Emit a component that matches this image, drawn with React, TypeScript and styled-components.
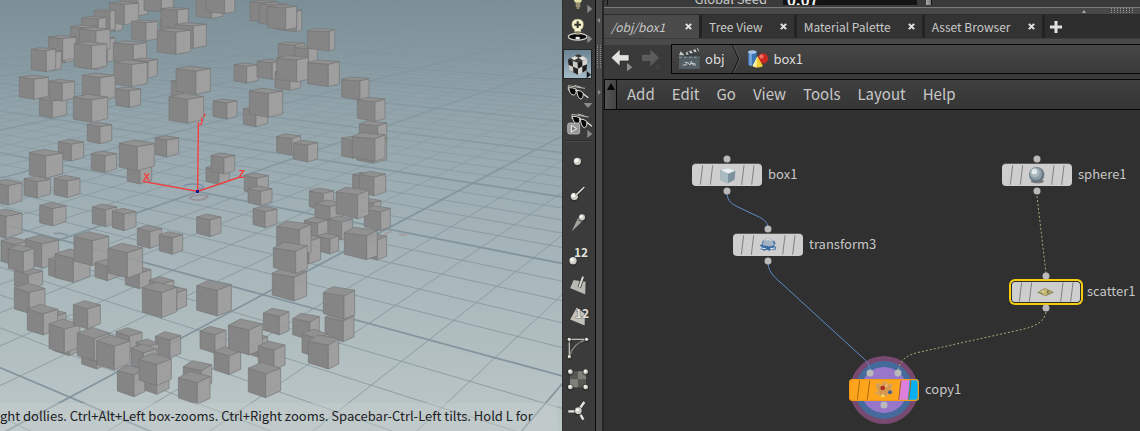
import React from "react";
import styled, { createGlobalStyle, css } from "styled-components";

const GlobalStyle = createGlobalStyle`
  * { box-sizing: border-box; }
  body { margin: 0; background: #303030; }
  body, button, input { font-family: "Noto Sans CJK SC", "Noto Sans CJK JP", sans-serif; }
  button { border: 0; padding: 0; margin: 0; background: none; color: inherit; cursor: pointer; }
  svg { display: block; }
`;

const Shell = styled.div`
  display: flex;
  height: 100vh;
  min-height: 300px;
  overflow: hidden;
  color: #c8c8c8;
`;

/* ---------- 3D viewport ---------- */

const Viewport = styled.section`
  flex: 562 1 0;
  min-width: 0;
  display: grid;
  grid-template: minmax(0, 1fr) / minmax(0, 1fr);
  overflow: hidden;
  background: #9dadb2;
`;

const SceneSvg = styled.svg`
  grid-area: 1 / 1;
  width: 100%;
  height: 100%;
`;

const Hint = styled.p`
  grid-area: 1 / 1;
  align-self: end;
  z-index: 1;
  margin: 0 5px 0 0;
  height: 28px;
  line-height: 26px;
  font-size: 13px;
  white-space: nowrap;
  overflow: hidden;
  color: #1c2022;
  background: rgba(200, 208, 208, 0.4);
`;

type Pt = [number, number];
type Line = { from: Pt; to: Pt; major: boolean };

const ORIGIN: Pt = [593, 575];
const VANISH_A: Pt = [-2842, -102];
const VANISH_B: Pt = [2860, -216];

const toward = (vp: Pt, w: number): Pt => [
  (ORIGIN[0] + w * vp[0]) / (1 + w),
  (ORIGIN[1] + w * vp[1]) / (1 + w),
];

const gridLine = (p: Pt, vp: Pt, major: boolean): Line => {
  const slope = (p[1] - vp[1]) / (p[0] - vp[0]);
  const at = (x: number): Pt => [x, p[1] + slope * (x - p[0])];
  return { from: at(-60), to: at(1760), major };
};

const gridLines: Line[] = [];
for (let i = -16; i <= 110; i++) {
  gridLines.push(gridLine(toward(VANISH_B, (i / 5) * 0.1539), VANISH_A, i % 5 === 0));
}
for (let i = -16; i <= 70; i++) {
  gridLines.push(gridLine(toward(VANISH_A, (i / 5) * 0.1417), VANISH_B, i % 5 === 0));
}

function Grid() {
  return (
    <g>
      {gridLines.map((l, i) => (
        <line
          key={i}
          x1={l.from[0]}
          y1={l.from[1]}
          x2={l.to[0]}
          y2={l.to[1]}
          stroke={l.major ? "#7c8e98" : "#84949b"}
          strokeWidth={l.major ? 5 : 3}
          opacity={l.major ? 0.8 : 0.62}
        />
      ))}
    </g>
  );
}

/* left, top, right, bottom, x of the front edge; ordered back to front */
const cubes: number[][] = [
  [360, -14, 443, 48, 413], [300, 38, 368, 94, 345], [328, 5, 416, 74, 373], [432, -25, 520, 36, 484],
  [480, 52, 560, 112, 530], [484, 22, 565, 84, 532], [588, -14, 668, 55, 635], [618, -25, 704, 41, 674],
  [750, 1, 830, 67, 800], [778, 8, 860, 76, 830], [830, 28, 905, 95, 890], [802, 15, 890, 89, 857],
  [283, 28, 345, 92, 330], [245, 49, 318, 110, 295], [270, 110, 345, 187, 322], [212, 75, 290, 145, 260],
  [238, 82, 330, 155, 288], [150, 124, 225, 188, 195], [146, 106, 228, 182, 188], [237, 140, 310, 209, 290],
  [223, 125, 320, 207, 275], [120, 150, 184, 212, 160], [94, 143, 167, 215, 139],
  [395, 60, 473, 123, 438], [340, 122, 440, 190, 400], [400, 174, 472, 234, 444], [342, 180, 442, 260, 395],
  [525, 68, 619, 145, 580], [472, 85, 572, 163, 528],
  [118, 290, 200, 354, 157], [58, 225, 145, 298, 102], [147, 238, 224, 303, 187],
  [247, 219, 345, 302, 300], [220, 283, 323, 367, 275], [348, 261, 422, 323, 388],
  [514, 238, 580, 300, 550], [528, 199, 631, 283, 588], [507, 281, 611, 370, 563],
  [639, 297, 711, 357, 681], [702, 189, 775, 249, 740], [771, 178, 850, 238, 817],
  [730, 320, 803, 380, 768], [748, 265, 848, 352, 805],
  [835, 126, 913, 190, 888], [885, 138, 952, 195, 925], [825, 209, 902, 271, 870], [830, 167, 925, 246, 890],
  [922, 86, 1004, 153, 988], [923, 180, 1018, 260, 985], [1025, 231, 1107, 300, 1080],
  [1072, 292, 1155, 364, 1125], [1078, 363, 1160, 440, 1133], [1025, 408, 1100, 475, 1060],
  [1070, 405, 1160, 490, 1120], [1057, 398, 1155, 484, 1125],
  [830, 402, 902, 465, 876], [880, 421, 953, 486, 923],
  [262, 367, 335, 431, 300], [175, 418, 251, 483, 214], [274, 453, 350, 517, 315], [466, 407, 536, 471, 500],
  [382, 490, 455, 552, 420], [358, 420, 463, 512, 412], [88, 448, 188, 535, 137],
  [72, 528, 152, 594, 112], [162, 526, 240, 593, 202], [-20, 538, 66, 615, 25],
  [618, 495, 688, 553, 657], [633, 459, 704, 522, 672], [733, 519, 805, 582, 771], [744, 558, 816, 617, 782],
  [759, 618, 831, 683, 795],
  [1058, 517, 1120, 575, 1092], [1078, 514, 1157, 587, 1122], [928, 564, 1001, 630, 970],
  [945, 600, 1030, 662, 990], [1085, 596, 1142, 640, 1120],
  [119, 607, 198, 678, 158], [277, 612, 350, 680, 317], [337, 625, 408, 692, 372], [-25, 627, 66, 715, 18],
  [412, 676, 485, 745, 450], [478, 695, 548, 763, 517], [590, 642, 663, 710, 630],
  [1093, 617, 1171, 692, 1142], [913, 652, 983, 710, 953], [985, 648, 1058, 720, 1025], [1008, 562, 1106, 656, 1073],
  [1085, 700, 1160, 780, 1132], [1033, 682, 1132, 779, 1100],
  [950, 700, 1016, 762, 990], [880, 702, 962, 792, 927],
  [43, 800, 128, 870, 85], [3, 712, 85, 795, 45], [76, 705, 176, 804, 125], [25, 735, 102, 817, 70],
  [146, 765, 230, 838, 190], [165, 747, 270, 847, 220], [222, 695, 326, 797, 277],
  [285, 778, 360, 842, 322], [376, 798, 453, 866, 418], [324, 730, 428, 834, 382],
  [448, 830, 522, 890, 485], [490, 858, 560, 930, 530], [427, 847, 530, 953, 485],
  [590, 840, 694, 948, 652],
  [817, 802, 920, 903, 882], [830, 663, 933, 768, 898], [820, 727, 922, 820, 887],
  [43, 850, 135, 940, 88], [130, 928, 198, 990, 168], [82, 913, 173, 1005, 130], [160, 1000, 235, 1067, 208],
  [147, 957, 240, 1060, 193], [220, 902, 301, 987, 263],
  [245, 1030, 330, 1107, 290], [232, 983, 330, 1083, 283], [348, 983, 426, 1058, 388],
  [466, 995, 542, 1075, 510], [408, 1017, 475, 1090, 437], [393, 1032, 470, 1110, 430], [290, 1005, 390, 1110, 343],
  [352, 1095, 435, 1190, 402], [435, 1110, 507, 1183, 470], [417, 1060, 514, 1157, 470],
  [790, 925, 867, 1005, 838], [600, 979, 678, 1060, 645], [740, 1000, 803, 1072, 775],
  [642, 1040, 722, 1124, 687], [685, 957, 787, 1065, 747],
  [775, 1023, 855, 1110, 822], [745, 1087, 842, 1193, 797],
  [550, 1082, 635, 1165, 605], [535, 1114, 630, 1213, 592],
  [975, 935, 1062, 1025, 1030], [970, 860, 1064, 958, 1032],
  [878, 940, 958, 1020, 930], [906, 988, 985, 1070, 945], [925, 1005, 1016, 1107, 985],
];

function Cube({ box }: { box: number[] }) {
  const [x1, y1, x2, y2, s] = box;
  const w = x2 - x1;
  const f = (s - x1) / w;
  const depth = w * (0.08 + 0.00024 * Math.max(0, (y1 + y2) / 2));
  const backX = x1 + w * (1 - f) * 0.9;
  const leftY = y1 + depth * f * 0.95;
  const rightY = y1 + depth * (1 - f) * 1.1;
  const frontY = y1 + depth;
  const leftB = y2 - depth * f * 0.85 - 2;
  const rightB = y2 - depth * (1 - f) * 1.1 - 3;
  return (
    <g stroke="#757575" strokeWidth={2} strokeLinejoin="round">
      <path fill="#868585" d={`M${x1} ${leftY}L${s} ${frontY}V${y2}L${x1} ${leftB}Z`} />
      <path fill="#9f9f9f" d={`M${s} ${frontY}L${x2} ${rightY}V${rightB}L${s} ${y2}Z`} />
      <path fill="#919191" d={`M${x1} ${leftY}L${backX} ${y1}L${x2} ${rightY}L${s} ${frontY}Z`} />
    </g>
  );
}

function Scene() {
  return (
    <SceneSvg viewBox="0 0 1686 1293" preserveAspectRatio="xMidYMid slice" role="img" aria-label="Perspective view of scattered boxes">
      <defs>
        <linearGradient id="sky" x1="0" y1="0" x2="0" y2="1">
          <stop offset="0" stopColor="#7b8f97" />
          <stop offset="0.25" stopColor="#92a4ab" />
          <stop offset="0.5" stopColor="#a1b1b6" />
          <stop offset="0.8" stopColor="#b1bec0" />
          <stop offset="1" stopColor="#bcc7c7" />
        </linearGradient>
        <linearGradient id="fadeFar" x1="0" y1="0" x2="0" y2="1">
          <stop offset="0" stopColor="#000" />
          <stop offset="0.04" stopColor="#1c1c1c" />
          <stop offset="0.15" stopColor="#696969" />
          <stop offset="0.4" stopColor="#c4c4c4" />
          <stop offset="0.6" stopColor="#fff" />
        </linearGradient>
        <linearGradient id="fadeNear" x1="0" y1="0" x2="0" y2="1">
          <stop offset="0.36" stopColor="#000" />
          <stop offset="0.5" stopColor="#555" />
          <stop offset="1" stopColor="#666" />
        </linearGradient>
        <mask id="farMask"><rect width="1686" height="1293" fill="url(#fadeFar)" /></mask>
        <mask id="nearMask"><rect width="1686" height="1293" fill="url(#fadeNear)" /></mask>
      </defs>
      <rect width="1686" height="1293" fill="url(#sky)" />
      <g mask="url(#farMask)"><Grid /></g>
      <g fill="none" strokeWidth="5">
        <path d="M552 560q0-8 26-8 28 0 32 8 0 6-14 6" stroke="#7f8da6" />
        <path d="M567 594q14-10 34-9 26 2 22 6-14 10-36 9-18-2-20-6" stroke="#968f95" />
        <path d="M162 700h22l20 6" stroke="#8795a3" />
        <path d="M1152 703l22-9M1196 704h24" stroke="#a49c9c" />
      </g>
      {cubes.map((c, i) => <Cube key={i} box={c} />)}
      <g mask="url(#nearMask)"><Grid /></g>
      <g stroke="#fb3b39" strokeWidth="4" fill="none">
        <path d="M593 574L595 366M593 574L428 544M593 574L714 533" />
        <path d="M433 520l14 22M447 520l-16 22M717 512h14l-14 20h16M605 352l1 12M616 341q-3 3-3 9M607 360q0 14-9 14" />
      </g>
      <rect x="588" y="570" width="9" height="9" fill="#12128c" />
    </SceneSvg>
  );
}

/* ---------- display toolbar ---------- */

const Toolbar = styled.div`
  flex: 0 0 33px;
  display: flex;
  flex-direction: column;
  overflow: hidden;
  background: #3b3b3b;
  border-left: 1px solid #303030;
`;

const ToolButton = styled.button<{ $h: number; $active?: boolean }>`
  flex: 0 0 ${(p) => p.$h}px;
  width: 32px;
  display: flex;
  justify-content: center;
  ${(p) =>
    p.$active &&
    css`
      width: 29px;
      background: linear-gradient(#6b8292, #a5bcc8);
      border: 1px solid #26292b;
    `}
`;

const ToolRule = styled.hr`
  flex: 0 0 2px;
  width: 29px;
  margin: 0 0 4px;
  border: 0;
  border-top: 1px solid #2c2c2c;
  border-bottom: 1px solid #484848;
`;

type ToolProps = { label: string; h?: number; active?: boolean; view: string; w?: number; children: React.ReactNode };

function Tool({ label, h = 31, active, view, w = 32, children }: ToolProps) {
  return (
    <ToolButton $h={h} $active={active} aria-label={label} aria-pressed={active}>
      <svg width={w} height={active ? h - 2 : h} viewBox={view}>{children}</svg>
    </ToolButton>
  );
}

const Glasses = ({ y = 0, x = 0 }) => (
  <g transform={`translate(${x} ${y})`}>
    <path d="M25 257l24 4 26 4M25 257q-1 10 1 15M42 256l20 5" stroke="#b9b9b2" strokeWidth="3" fill="none" />
    <path d="M26 263q13-1 23 5 0 16-8 17-12 0-15-22z" fill="#070707" stroke="#dcdcd4" strokeWidth="3" />
    <path d="M50 271q12 0 20 8 0 16-7 18-10 0-13-26z" fill="#070707" stroke="#dcdcd4" strokeWidth="3" />
    <path d="M69 281l16 12M46 270l6 2" stroke="#e4e4dc" strokeWidth="4" />
  </g>
);

const Ball = ({ x, y, r = 10 }: { x: number; y: number; r?: number }) => (
  <g>
    <circle cx={x} cy={y + 2} r={r + 3} fill="#222" opacity="0.5" />
    <circle cx={x} cy={y} r={r} fill="#cfcfc8" />
    <circle cx={x - r / 4} cy={y - r / 4} r={r / 2} fill="#fafaf4" />
  </g>
);

const numeral = { fill: "#e2e2dc", fontSize: 36, fontWeight: 700, fontFamily: "Noto Sans CJK SC, sans-serif", stroke: "#2a2a2a", strokeWidth: 2, paintOrder: "stroke" } as const;

function DisplayToolbar() {
  return (
    <Toolbar role="toolbar" aria-label="Display options">
      <Tool label="Lighting" h={14} view="9 0 96 42">
        <path d="M41-6h26q-2 14-7 14H48q-6 0-7-14z" fill="#e3e0a6" />
        <path d="M47 12h14M47 18h14M50 24h8" stroke="#b5aa7d" strokeWidth="5" />
        <path d="M82 14l15 13-15 12z" fill="#8b8b8b" />
      </Tool>
      <Tool label="Headlight" h={35} view="9 42 96 105">
        <ellipse cx="53" cy="110" rx="28" ry="10" fill="#0a0a0a" stroke="#d2d2ca" strokeWidth="4" />
        <ellipse cx="53" cy="114" rx="7" ry="4" fill="#eee" />
        <path d="M35 74q0-17 18-17t18 17q0 9-8 15v8H43v-8q-8-6-8-15z" fill="#f4f1cb" stroke="#6d6b54" strokeWidth="2" />
        <path d="M53 64v20M43 74h20" stroke="#33332b" strokeWidth="6" />
        <path d="M46 96h14M47 102h12" stroke="#8e8868" strokeWidth="5" />
        <path d="M82 104l15 13-15 12z" fill="#8b8b8b" />
      </Tool>
      <Tool label="Shading mode" h={30} active w={27} view="14 150 81 84">
        <path d="M26 178l29 10 2 37-28-15z" fill="#242424" />
        <path d="M55 188l29-12-2 34-25 15z" fill="#d4d4d0" />
        <path d="M26 178l31-16 27 14-29 12z" fill="#3a3a36" />
        <path d="M34 174l12-6 12 5-13 8zM58 173l12-5 14 8-14 6z" fill="#dcdcd8" />
        <path d="M40 183l15 5 1 18-15-6zM27 194l14 6 1 17-13-7z" fill="#cbcbc7" />
        <path d="M55 188l14-6v17l-13 7zM69 199l14-6-1 17-13 8z" fill="#1b1b1b" />
        <path d="M82 213l13 11-13 11z" fill="#16191b" />
      </Tool>
      <Tool label="Visible objects" h={30} view="9 237 96 90">
        <Glasses />
        <path d="M71 309h26l-13 15z" fill="#8b8b8b" />
      </Tool>
      <Tool label="Flipbook visibility" h={31} view="9 327 96 93">
        <Glasses x={11} y={86} />
        <rect x="23" y="369" width="36" height="33" rx="6" fill="#999" stroke="#d0d0d0" strokeWidth="2" />
        <path d="M34 376l16 10-16 10z" fill="#777" stroke="#f4f4f4" strokeWidth="3" />
        <path d="M82 389l15 13-15 12z" fill="#8b8b8b" />
      </Tool>
      <ToolRule />
      <Tool label="Display points" view="9 437 96 93"><Ball x={52} y={483} r={11} /></Tool>
      <Tool label="Point normals" view="9 530 96 93">
        <Ball x={43} y={588} r={11} />
        <path d="M48 584l25-24" stroke="#1d1d1d" strokeWidth="9" />
        <path d="M47 585l26-25" stroke="#d9d9d2" strokeWidth="5" />
      </Tool>
      <Tool label="Point trails" view="9 626 96 93">
        <path d="M58 648l14 13-37 35z" fill="#a5a59f" />
        <Ball x={66} y={654} r={9} />
      </Tool>
      <Tool label="Point numbers" view="9 714 96 93">
        <text x="42" y="767" {...numeral}>12</text>
        <Ball x={39} y={779} r={11} />
      </Tool>
      <Tool label="Primitive normals" view="9 810 96 93">
        <path d="M40 839l38 5-1 41-48-20z" fill="#b9b9b2" stroke="#2a2a2a" strokeWidth="2" />
        <path d="M58 862l11-32" stroke="#222" strokeWidth="10" />
        <path d="M58 862l11-32" stroke="#deded6" strokeWidth="6" />
      </Tool>
      <Tool label="Primitive numbers" view="9 902 96 93">
        <path d="M50 920l26 20-1 37-46-19z" fill="#c2c2bb" stroke="#2a2a2a" strokeWidth="2" />
        <text x="45" y="952" {...numeral}>12</text>
      </Tool>
      <Tool label="Hulls" view="9 995 96 93">
        <path d="M28 1017h52M28 1017v52" stroke="#bfbfb8" strokeWidth="4" />
        <path d="M80 1017q-42 12-52 52" stroke="#8c8c86" strokeWidth="4" fill="none" />
        <Ball x={28} y={1017} r={5} /><Ball x={80} y={1017} r={5} /><Ball x={28} y={1069} r={5} />
      </Tool>
      <Tool label="UV texture" view="9 1088 96 93">
        <rect x="30" y="1113" width="48" height="48" fill="#585854" />
        <path d="M54 1113h24v24H54zM30 1137h24v24H30z" fill="#80807a" />
        <Ball x={31} y={1114} r={7} /><Ball x={77} y={1114} r={7} /><Ball x={31} y={1160} r={7} /><Ball x={77} y={1160} r={7} />
      </Tool>
      <Tool label="Particle origin" view="9 1181 96 93">
        <path d="M25 1233h24M61 1222l12-17M61 1242l9 16" stroke="#e6e6df" strokeWidth="7" />
        <Ball x={55} y={1231} r={10} />
      </Tool>
    </Toolbar>
  );
}

/* ---------- pane divider ---------- */

const Divider = styled.div`
  flex: 0 0 9px;
  border: solid #0c0c0c;
  border-width: 0 2px 0 1px;
  border-right-color: #262626;
  background: #4a4a4a;
`;

/* ---------- network pane ---------- */

const Pane = styled.section`
  flex: 536 1 0;
  min-width: 0;
  display: flex;
  flex-direction: column;
  background: #303030;
`;

const ParamStrip = styled.div`
  flex: 0 0 7px;
  display: flex;
  align-items: flex-end;
  overflow: hidden;
  padding: 0 0 2px 3px;
  background: #3a3a3a;
`;

const ParamLabel = styled.label`
  width: 176px;
  flex: none;
  padding-right: 16px;
  text-align: right;
  font-size: 13px;
  line-height: 12px;
  height: 12px;
  border-left: 1px solid #111;
`;

const ParamField = styled.input`
  width: 134px;
  height: 12px;
  flex: none;
  border: 0;
  padding: 0 4px;
  background: #131313;
  color: #f2f2f2;
  font-size: 15px;
  font-weight: 700;
`;

const SliderKnob = styled.span`
  width: 6px;
  height: 16px;
  margin-left: 9px;
  background: linear-gradient(90deg, #aaa, #777);
  border-right: 1px solid #111;
`;

const Splitter = styled.div`
  flex: 0 0 8px;
  display: flex;
  justify-content: flex-end;
  align-items: center;
  gap: 25px;
  padding-right: 5px;
  background: #484848;
  border-top: 1px solid #7b7b7b;
  border-bottom: 1px solid #2b2b2b;
`;

const TabBar = styled.div`
  flex: 0 0 23px;
  display: flex;
  background: #2e2e2e;
  overflow: hidden;
`;

const TabItem = styled.div<{ $active?: boolean }>`
  display: flex;
  align-items: center;
  padding: 0 7px;
  font-size: 12px;
  border-right: 3px solid #232323;
  background: ${(p) => (p.$active ? "#4a4a4a" : "#333")};
  font-style: ${(p) => (p.$active ? "italic" : "normal")};
  gap: ${(p) => (p.$active ? 20 : 17)}px;
`;

const TabLabel = styled.button`
  font: inherit;
  line-height: 22px;
  white-space: nowrap;
`;

const IconButton = styled.button`
  display: flex;
  align-items: center;
  justify-content: center;
`;

const PathBar = styled.div`
  flex: 0 0 41px;
  display: flex;
  align-items: center;
  gap: 9px;
  padding-left: 5px;
  border-top: 1px solid #3a3a3a;
  background: linear-gradient(#4a4a4a 0 6px, #3a3a3a 6px);
`;

const PathField = styled.nav`
  flex: 1;
  height: 30px;
  display: flex;
  align-items: center;
  padding-left: 6px;
  border: 1px solid #050505;
  border-right: 0;
  background: linear-gradient(#474747, #3a3a3a);
`;

const Crumb = styled.button`
  display: flex;
  align-items: center;
  gap: 4px;
  font-size: 13px;
  line-height: 20px;
  color: #dcdcdc;
`;

const MenuBar = styled.div`
  flex: 0 0 31px;
  display: flex;
  align-items: stretch;
  border: solid #070707;
  border-width: 1px 0 1px 1px;
  background: linear-gradient(#404040, #353535);
`;

const Collapse = styled.button`
  flex: 0 0 12px;
  padding: 3px 0 0;
  display: flex;
  align-items: flex-start;
  justify-content: center;
  background: linear-gradient(90deg, #555, #444);
  border-right: 1px solid #070707;
`;

const MenuList = styled.div`
  display: flex;
  align-items: flex-start;
  gap: 17px;
  padding-left: 10px;
`;

const MenuItem = styled.button`
  font-size: 15px;
  line-height: 27px;
`;

const CloseIcon = () => (
  <svg width="7" height="7" viewBox="0 0 8 8">
    <path d="M1 1l6 6M7 1L1 7" stroke="#e0e0e0" strokeWidth="2.4" />
  </svg>
);

const tabs = ["/obj/box1", "Tree View", "Material Palette", "Asset Browser"];
const menus = ["Add", "Edit", "Go", "View", "Tools", "Layout", "Help"];

/* ---------- network canvas ---------- */

const Canvas = styled.div`
  flex: 1;
  min-height: 0;
  position: relative;
  overflow: hidden;
  background: #303030;
`;

const Wires = styled.svg`
  position: absolute;
  inset: 0;
  width: 100%;
  height: 100%;
  pointer-events: none;
`;

const NodeSlot = styled.div<{ $x: number; $y: number }>`
  position: absolute;
  left: ${(p) => p.$x}px;
  top: ${(p) => p.$y}px;
  display: flex;
  align-items: center;
  gap: 6px;
`;

const NodeBody = styled.button<{ $selected?: boolean; $tint?: boolean }>`
  width: 70px;
  height: 22px;
  overflow: hidden;
  border-radius: 4px;
  background: ${(p) => (p.$tint ? "#ffa51c" : "#cecece")};
  box-shadow: ${(p) => (p.$selected ? "0 0 0 2px #f7cc0c" : p.$tint ? "inset 0 0 0 1px #f08a12" : "0 -1px 0 #5c5c5c")};
`;

const NodeName = styled.span`
  font-size: 13px;
  line-height: 22px;
  margin-top: -2px;
  white-space: nowrap;
  color: #c6c6c6;
`;

type NodeProps = { x: number; y: number; name: string; selected?: boolean; tint?: boolean; children: React.ReactNode };

function NetworkNode({ x, y, name, selected, tint, children }: NodeProps) {
  return (
    <NodeSlot $x={x} $y={y}>
      <NodeBody $selected={selected} $tint={tint} aria-label={name}>
        <svg width="70" height="22" viewBox="0 0 210 66">
          {tint && <path d="M154 0h30l-4 66h-32z" fill="#df7fdc" />}
          {tint && <path d="M182 0h28v66h-34z" fill="#06aef2" />}
          <path
            d="M32 4l-7 58M62 4l-7 58M156 4l-7 58M186 4l-7 58"
            stroke={tint ? "#a8660f" : "#808080"}
            strokeWidth="3"
          />
          {children}
          {tint && <rect x="2" y="2" width="206" height="62" rx="10" fill="none" stroke="#f39a1b" strokeWidth="4" />}
          {selected && <rect x="1" y="1" width="208" height="64" rx="11" fill="none" stroke="#111" strokeWidth="3" />}
        </svg>
      </NodeBody>
      <NodeName>{name}</NodeName>
    </NodeSlot>
  );
}

const ports: Pt[] = [
  [123, 49], [123, 81], [164, 119], [164, 151], [433, 49], [433, 81], [442, 166], [442, 198],
  [266, 263], [294, 263], [280, 295],
];

function Network() {
  return (
    <Canvas>
      <Wires>
        <circle cx="280" cy="280" r="34" fill="#784a70" />
        <circle cx="280" cy="280" r="29" fill="#456a9c" />
        <circle cx="280" cy="280" r="23" fill="#9877cb" />
        <g fill="none" stroke="#5f8bcb" strokeWidth="1">
          <path d="M123 84C124 92 128 94 134 97L153 106C160 109 163 112 164 117" />
          <path d="M164 154C165 162 170 167 176 172L258 247C264 252 266 256 266 261" />
        </g>
        <g fill="none" stroke="#a3ad78" strokeWidth="1" strokeDasharray="2 2">
          <path d="M433 86L442 163" />
          <path d="M442 202C440 212 432 216 420 219L316 242C302 245 296 250 294 261" />
        </g>
      </Wires>
      <NetworkNode x={88} y={54} name="box1">
        <path d="M85 18l24-6 21 8-2 27-20 11-22-10z" fill="#7d929d" />
        <path d="M85 18l24-6 21 8-22 9z" fill="#e8eef1" />
        <path d="M85 18l23 11v29L87 48z" fill="#aabbc4" />
      </NetworkNode>
      <NetworkNode x={129} y={124} name="transform3">
        <path d="M88 22l14-6 4 6 18-2 4 10-6 3 8 8-4 7-12-2-4 5-8-4-8 3-12-5 4-6-6-5 8-4z" fill="#3e6da2" />
        <path d="M92 20q14-14 28 0l3 12q-10 8-20 4l-14-2z" fill="#a3b3c2" />
        <path d="M100 18q8-5 14 2M84 42l14 2M112 44l14-2" stroke="#e4ebf2" strokeWidth="3" fill="none" />
      </NetworkNode>
      <NetworkNode x={398} y={54} name="sphere1">
        <ellipse cx="106" cy="52" rx="20" ry="6" fill="#777" />
        <circle cx="104" cy="32" r="23" fill="#66757f" />
        <circle cx="102" cy="29" r="19" fill="#8c9ba4" />
        <circle cx="99" cy="26" r="14" fill="#abb9c0" />
        <circle cx="97" cy="23" r="8" fill="#e3eaee" />
      </NetworkNode>
      <NetworkNode x={407} y={171} name="scatter1" selected>
        <path d="M78 34l24-13 27 13-26 12z" fill="#8a8253" />
        <path d="M81 31l14-2 8-8 8 9 13 3-13 4-9 8-9-8z" fill="#c2b974" />
        <circle cx="96" cy="31" r="3" fill="#e8e2b0" /><circle cx="110" cy="33" r="3" fill="#6d663c" />
      </NetworkNode>
      <NetworkNode x={245} y={269} name="copy1" tint>
        <path d="M86 16l10 4 10-12 10 9 12-2-3 13 7 11-13 3-6 9-9-5-13 4-1-13-7-8z" fill="#d5974c" stroke="#d9a35a" strokeWidth="4" />
        <circle cx="86" cy="16" r="5" fill="#c9a06a" /><circle cx="126" cy="18" r="4" fill="#c9a06a" /><circle cx="84" cy="42" r="4" fill="#c9a06a" />
        <circle cx="101" cy="27" r="7" fill="#b12f22" />
        <circle cx="112" cy="20" r="4" fill="#edb87c" />
        <circle cx="123" cy="40" r="6" fill="#45628a" />
        <path d="M96 54l5-10 6 10z" fill="#f6e66a" />
      </NetworkNode>
      <Wires>
        {ports.map(([x, y]) => <circle key={`${x}-${y}`} cx={x} cy={y} r="3.5" fill="#b9b9b9" />)}
      </Wires>
    </Canvas>
  );
}

const dots = Array.from({ length: 24 }, (_, i) => i);

export default function App() {
  return (
    <Shell>
      <GlobalStyle />
      <Viewport>
        <Scene />
        <Hint>ght dollies. Ctrl+Alt+Left box-zooms. Ctrl+Right zooms. Spacebar-Ctrl-Left tilts. Hold L for</Hint>
      </Viewport>
      <DisplayToolbar />
      <Divider>
        <svg width="6" height="110" viewBox="0 0 6 110">
          <path d="M4 18v5L1 20zM2 90v5l3-3z" fill="#8a8a8a" />
          {dots.map((i) => (
            <rect key={i} x={(i % 2) * 3 + 1} y={45 + Math.floor(i / 2) * 2} width="1" height="1" fill="#8a8a8a" />
          ))}
        </svg>
      </Divider>
      <Pane>
        <ParamStrip>
          <ParamLabel htmlFor="seed">Global Seed</ParamLabel>
          <ParamField id="seed" defaultValue="0.07" />
          <SliderKnob />
        </ParamStrip>
        <Splitter>
          <svg width="4" height="3" viewBox="0 0 4 3"><path d="M0 3l2-3 2 3z" fill="#aaa" /></svg>
          <svg width="24" height="6" viewBox="0 0 24 6">
            {dots.map((i) => (
              <rect key={i} x={(i % 8) * 3} y={Math.floor(i / 8) * 2} width="1" height="1" fill="#999" />
            ))}
          </svg>
        </Splitter>
        <TabBar>
          {tabs.map((t, i) => (
            <TabItem key={t} $active={i === 0}>
              <TabLabel>{t}</TabLabel>
              <IconButton aria-label={`Close ${t}`}><CloseIcon /></IconButton>
            </TabItem>
          ))}
          <IconButton aria-label="New tab">
            <svg width="24" height="22" viewBox="0 0 24 22"><path d="M11 5v12M5 11h12" stroke="#e2e2e2" strokeWidth="3" /></svg>
          </IconButton>
        </TabBar>
        <PathBar>
          <IconButton aria-label="Back">
            <svg width="24" height="28" viewBox="0 0 72 84">
              <path d="M6 38l27-25v16h27v19H33v16z" fill="#e0e0dc" stroke="#222" strokeWidth="2" />
              <path d="M54 54l16 13-16 12z" fill="#8d8d8d" />
            </svg>
          </IconButton>
          <IconButton aria-label="Forward">
            <svg width="20" height="28" viewBox="6 0 60 84">
              <path d="M57 38L31 13v16H4v19h27v16z" fill="#5c5c5c" />
              <path d="M50 56l10 11-10 10z" fill="#444" />
            </svg>
          </IconButton>
          <PathField aria-label="Network path">
            <Crumb>
              <svg width="23" height="24" viewBox="0 0 69 72">
                <path d="M3 21l8-9 4 12 48-6 4 10H4z" fill="#3a4144" />
                <path d="M3 25l5-12 12 12zM24 16l36-12 3 8-38 12z" fill="#c3c7c8" />
                <path d="M30 14l6 8M42 10l6 8M54 6l5 8" stroke="#333" strokeWidth="5" />
                <rect x="3" y="28" width="62" height="38" fill="#525e64" />
                <path d="M3 31h62" stroke="#8a9395" strokeWidth="4" strokeDasharray="8 7" />
                <path d="M14 54h10l4-9 8 9 4-11 6 11h8M20 46h6M38 50h14" stroke="#c4caca" strokeWidth="3" fill="none" />
              </svg>
              obj
            </Crumb>
            <svg width="20" height="28" viewBox="0 0 60 84">
              <path d="M22 0l19 42-19 42" stroke="#161616" strokeWidth="3" fill="none" />
              <path d="M26 0l19 42-19 42" stroke="#606060" strokeWidth="2" fill="none" />
            </svg>
            <Crumb>
              <svg width="25" height="20" viewBox="-4 0 78 66">
                <path d="M4 10v42q14 9 28 0V10z" fill="#3c74b5" />
                <path d="M8 12v41q4 3 8 3V12z" fill="#7eaade" />
                <ellipse cx="18" cy="10" rx="14" ry="6" fill="#a9c6ea" />
                <circle cx="53" cy="31" r="17" fill="#c8281e" />
                <circle cx="48" cy="25" r="7" fill="#ee7366" />
                <path d="M35 24l18 32q-18 10-34 0z" fill="#f2cf35" />
                <path d="M35 24l-3 37q-8-1-13-5z" fill="#faf0a0" />
              </svg>
              box1
            </Crumb>
          </PathField>
        </PathBar>
        <MenuBar>
          <Collapse aria-label="Collapse menu">
            <svg width="8" height="7" viewBox="0 0 8 7"><path d="M0 7l4-7 4 7z" fill="#050505" /></svg>
          </Collapse>
          <MenuList>
            {menus.map((m) => <MenuItem key={m}>{m}</MenuItem>)}
          </MenuList>
        </MenuBar>
        <Network />
      </Pane>
    </Shell>
  );
}
